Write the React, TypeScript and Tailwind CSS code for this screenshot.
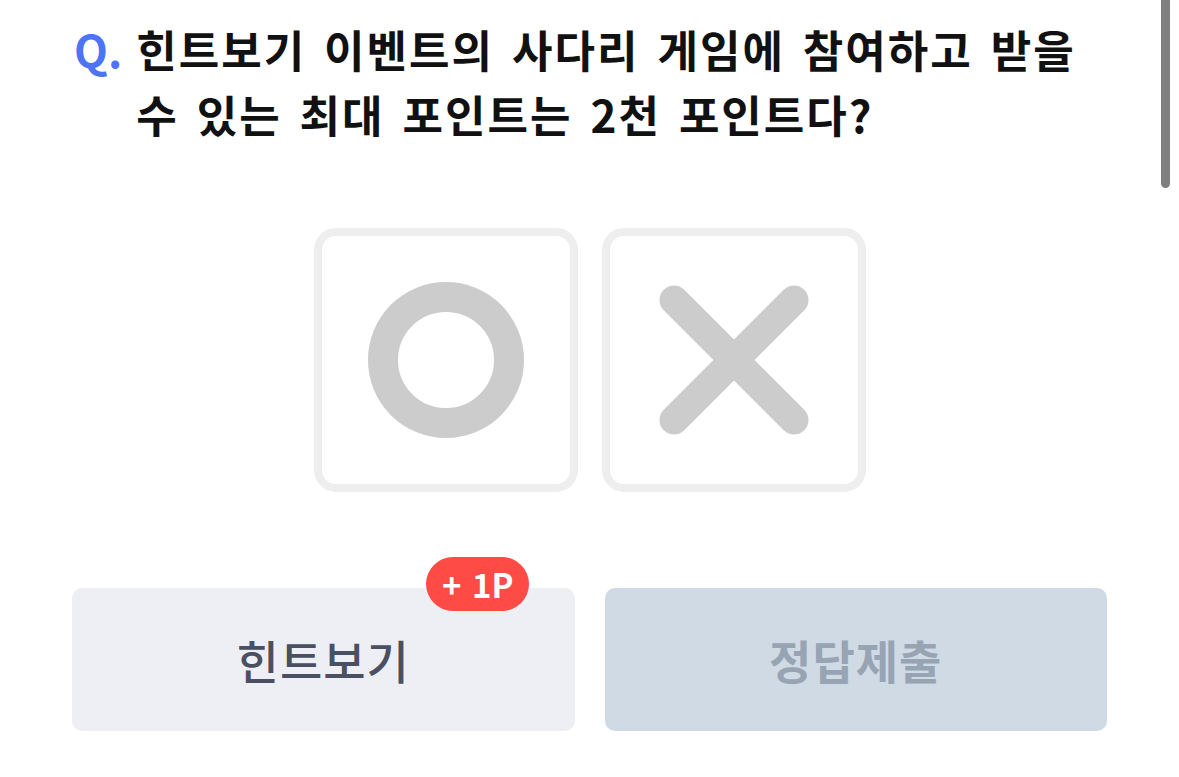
import React from "react";

const font = { fontFamily: '"Noto Sans CJK KR", "Noto Sans", sans-serif' };

function OMark() {
  return (
    <svg width="156" height="156" viewBox="0 0 156 156">
      <circle cx="78" cy="78" r="63" fill="none" stroke="#cccccc" strokeWidth="30" />
    </svg>
  );
}

function XMark() {
  return (
    <svg width="150" height="150" viewBox="0 0 150 150">
      <path d="M15 15 L135 135 M135 15 L15 135" stroke="#cccccc" strokeWidth="29" strokeLinecap="round" />
    </svg>
  );
}

export default function App() {
  return (
    <div className="relative w-full h-[777px] bg-white overflow-hidden" style={font}>
      {/* 스크롤바 */}
      <div className="absolute right-[9px] top-0 w-[9px] h-[188px] rounded-b-full bg-[#7f7f7f]" />

      <div className="px-[72px] pt-[17px]">
        <div className="flex gap-[14px] pl-[2px]">
          <span className="text-[44px] leading-[65px] font-bold text-[#4d74f6] shrink-0">Q.</span>
          <p className="text-[44px] leading-[65px] font-bold text-[#111111] tracking-[2px] [word-spacing:6px]">
            힌트보기 이벤트의 사다리 게임에 참여하고 받을
            <br />
            수 있는 최대 포인트는 2천 포인트다?
          </p>
        </div>

        <div className="flex justify-center gap-[24px] mt-[81px]">
          <button className="w-[264px] h-[264px] rounded-[22px] border-[8px] border-[#eeeeee] bg-white flex items-center justify-center">
            <OMark />
          </button>
          <button className="w-[264px] h-[264px] rounded-[22px] border-[8px] border-[#eeeeee] bg-white flex items-center justify-center">
            <XMark />
          </button>
        </div>

        <div className="grid grid-cols-2 gap-[30px] mt-[96px]">
          <div className="relative">
            <button className="w-full h-[143px] rounded-[10px] bg-[#eeeff5] text-[46px] font-medium tracking-[1px] text-[#4a4f62]">
              힌트보기
            </button>
            <span className="absolute left-[354px] top-[-31px] h-[54px] px-[16px] rounded-full bg-[#ff4b45] text-white text-[33px] font-bold leading-[54px] [word-spacing:3px]">
              + 1P
            </span>
          </div>
          <button className="w-full h-[143px] rounded-[10px] bg-[#d0dae5] text-[46px] font-bold tracking-[1px] text-[#97a4b4]">
            정답제출
          </button>
        </div>
      </div>
    </div>
  );
}
